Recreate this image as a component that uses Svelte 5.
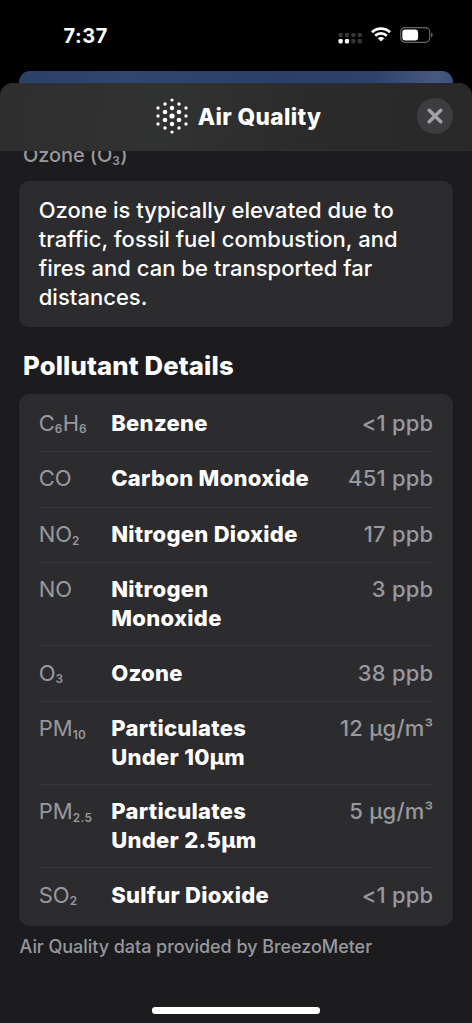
<script lang="ts">
	type Part = { text: string; sub?: boolean };

	const pollutants: { formula: Part[]; name: string[]; value: string; cubic?: boolean }[] = [
		{
			formula: [{ text: 'C' }, { text: '6', sub: true }, { text: 'H' }, { text: '6', sub: true }],
			name: ['Benzene'],
			value: '<1 ppb'
		},
		{ formula: [{ text: 'CO' }], name: ['Carbon Monoxide'], value: '451 ppb' },
		{
			formula: [{ text: 'NO' }, { text: '2', sub: true }],
			name: ['Nitrogen Dioxide'],
			value: '17 ppb'
		},
		{ formula: [{ text: 'NO' }], name: ['Nitrogen', 'Monoxide'], value: '3 ppb' },
		{ formula: [{ text: 'O' }, { text: '3', sub: true }], name: ['Ozone'], value: '38 ppb' },
		{
			formula: [{ text: 'PM' }, { text: '10', sub: true }],
			name: ['Particulates', 'Under 10μm'],
			value: '12 μg/m',
			cubic: true
		},
		{
			formula: [{ text: 'PM' }, { text: '2.5', sub: true }],
			name: ['Particulates', 'Under 2.5μm'],
			value: '5 μg/m',
			cubic: true
		},
		{
			formula: [{ text: 'SO' }, { text: '2', sub: true }],
			name: ['Sulfur Dioxide'],
			value: '<1 ppb'
		}
	];

	const description = [
		'Ozone is typically elevated due to',
		'traffic, fossil fuel combustion, and',
		'fires and can be transported far',
		'distances.'
	];

	// x, y, radius
	const dots = [
		[18, 2, 1.6],
		[18, 10, 2.2],
		[18, 18, 2.6],
		[18, 26, 2.2],
		[18, 34, 1.6],
		[11, 6, 1.7],
		[11, 14, 2.3],
		[11, 22, 2.3],
		[11, 30, 1.7],
		[25, 6, 1.7],
		[25, 14, 2.3],
		[25, 22, 2.3],
		[25, 30, 1.7],
		[4, 10, 1.7],
		[4, 18, 1.7],
		[4, 26, 1.7],
		[32, 10, 1.7],
		[32, 18, 1.7],
		[32, 26, 1.7]
	];
</script>

<div class="screen">
	<div class="status-bar">
		<span class="time">7:37</span>
		<div class="indicators">
			<svg class="signal" viewBox="0 0 24 11" width="24" height="11">
				{#each [0, 1, 2, 3] as i}
					<rect x={0.5 + i * 6.4} y="0" width="4.2" height="4" rx="1.2" fill="#363636" />
					<rect
						x={0.5 + i * 6.4}
						y="6"
						width="4.2"
						height="4.4"
						rx="1.3"
						fill={i < 2 ? '#fff' : '#363636'}
					/>
				{/each}
			</svg>
			<svg class="wifi" viewBox="0 0 20 15" width="20" height="15">
				<g fill="none" stroke="#fff" stroke-width="2.7">
					<path d="M1 5.3C6 .4 14 .4 19 5.3" />
					<path d="M4.2 8.7c3.3-3.1 8.3-3.1 11.6 0" />
				</g>
				<path d="M6.7 11.2c1.9-1.7 4.7-1.7 6.6 0L10 14.6z" fill="#fff" />
			</svg>
			<svg class="battery" viewBox="0 0 34 16" width="34" height="16">
				<rect x=".7" y=".7" width="29" height="14.6" rx="4.4" fill="none" stroke="#666" stroke-width="1.2" />
				<rect x="2.3" y="2.4" width="15.8" height="11.2" rx="3" fill="#fff" />
				<path d="M31.2 5.6c2 .8 2 4 0 4.8z" fill="#666" />
			</svg>
		</div>
	</div>

	<div class="backdrop"></div>

	<div class="sheet">
		<header class="sheet-header">
			<div class="title">
				<svg viewBox="0 0 36 36" width="36" height="36">
					{#each dots as [x, y, r]}
						<circle cx={x} cy={y} {r} fill="#fff" />
					{/each}
				</svg>
				<h1>Air Quality</h1>
			</div>
			<button class="close" aria-label="Close">
				<svg viewBox="0 0 16 16" width="16" height="16">
					<path d="M2.2 2.2l11.6 11.6M13.8 2.2L2.2 13.8" />
				</svg>
			</button>
		</header>

		<main class="content">
			<div class="clip">
				<p class="primary">Ozone (O<span class="sub">3</span>)</p>
			</div>

			<div class="card description">
				{#each description as line}
					<span>{line}</span>
				{/each}
			</div>

			<h2>Pollutant Details</h2>

			<div class="card list">
				{#each pollutants as item}
					<div class="row">
						<span class="formula">
							{#each item.formula as part}<span class:sub={part.sub}>{part.text}</span>{/each}
						</span>
						<span class="name">
							{#each item.name as line}<span>{line}</span>{/each}
						</span>
						<span class="value">{item.value}{#if item.cubic}<span class="cubic">³</span>{/if}</span>
					</div>
				{/each}
			</div>

			<p class="credit">Air Quality data provided by BreezoMeter</p>
		</main>

		<div class="home-indicator"></div>
	</div>
</div>

<style>
	:global(body) {
		background: #000;
	}
	.screen {
		width: 472px;
		height: 1023px;
		display: flex;
		flex-direction: column;
		overflow: hidden;
		background: #000;
		color: #fff;
		font-family: Inter, 'Liberation Sans', sans-serif;
	}
	h1,
	h2,
	p {
		margin: 0;
	}

	.status-bar {
		box-sizing: border-box;
		height: 71px;
		flex: none;
		display: flex;
		justify-content: space-between;
		padding: 23.5px 38px 0 63.5px;
	}
	.time {
		font-size: 20px;
		line-height: 24px;
		font-weight: 700;
		letter-spacing: 0.6px;
	}
	.indicators {
		display: flex;
		align-items: flex-start;
		padding-top: 3.5px;
	}
	.signal {
		margin: 6px 9px 0 0;
	}
	.wifi {
		margin-right: 9px;
	}

	.backdrop {
		height: 12px;
		flex: none;
		margin: 0 19px;
		border-radius: 11px 11px 0 0;
		background: linear-gradient(90deg, #2c4068, #304570 25%, #2b4069 60%, #2e426b 82%, #48597f 96%, #3c5079);
	}

	.sheet {
		flex: 1;
		display: flex;
		flex-direction: column;
		border-radius: 13px 13px 0 0;
		overflow: hidden;
		background: #1c1c1e;
	}
	.sheet-header {
		box-sizing: border-box;
		height: 68px;
		flex: none;
		display: flex;
		align-items: center;
		justify-content: space-between;
		padding: 0 19.5px 1px 153.7px;
		border-bottom: 1px solid #313132;
		background: linear-gradient(100deg, #2e2e2e, #313232 35%, #2b2b2b 65%, #282828);
	}
	.title {
		display: flex;
		align-items: center;
		gap: 8px;
	}
	h1 {
		padding-top: 1px;
		font-size: 22.6px;
		line-height: 28px;
		font-weight: 800;
		letter-spacing: 0.38px;
	}
	.close {
		width: 36px;
		height: 36px;
		padding: 0;
		border: 0;
		border-radius: 50%;
		display: flex;
		align-items: center;
		justify-content: center;
		background: #3d3d40;
	}
	.close path {
		fill: none;
		stroke: #a1a1a8;
		stroke-width: 3.4;
		stroke-linecap: round;
	}

	.content {
		flex: 1;
		padding: 0 19px;
	}
	/* label scrolled partly under the header */
	.clip {
		height: 29.6px;
		display: flex;
		align-items: flex-end;
		overflow: hidden;
	}
	.primary {
		padding: 0 0 13.4px 4px;
		font-size: 20px;
		line-height: 24px;
		font-weight: 500;
		letter-spacing: -0.1px;
		color: #98989f;
		white-space: nowrap;
	}
	.card {
		border-radius: 10px;
		background: #2c2c2e;
	}
	.description {
		box-sizing: border-box;
		height: 146px;
		padding: 15.8px 19.7px;
		display: flex;
		flex-direction: column;
		font-size: 22px;
		line-height: 28.75px;
		font-weight: 500;
		letter-spacing: 0.03px;
		white-space: nowrap;
	}
	h2 {
		padding: 23px 4px 11.7px;
		font-size: 25.7px;
		line-height: 32.3px;
		font-weight: 800;
		letter-spacing: 0.14px;
	}
	.list {
		padding: 1.8px 19.7px 2.7px;
	}
	.row {
		box-sizing: border-box;
		min-height: 55.6px;
		display: grid;
		grid-template-columns: 72.5px 1fr auto;
		padding: 13.2px 0 12.5px;
		font-size: 22px;
		line-height: 28.7px;
		white-space: nowrap;
	}
	.row + .row {
		border-top: 1px solid #38383a;
		padding-top: 12.3px;
	}
	.formula {
		color: #98989f;
	}
	.name {
		display: flex;
		flex-direction: column;
		font-weight: 800;
		letter-spacing: 0.3px;
	}
	.value {
		font-weight: 500;
		letter-spacing: 0.2px;
		color: #98989f;
	}
	.cubic {
		position: relative;
		top: -1px;
		font-size: 19px;
		line-height: 0;
	}
	.sub {
		position: relative;
		top: 2.8px;
		font-size: 11.8px;
		line-height: 0;
		font-weight: 600;
		letter-spacing: 0.4px;
	}
	.credit {
		padding: 9.3px 0.6px 0;
		font-size: 18px;
		line-height: 24px;
		font-weight: 500;
		letter-spacing: -0.05px;
		color: #98989f;
		white-space: nowrap;
	}

	.home-indicator {
		width: 168px;
		height: 6.6px;
		flex: none;
		margin: 0 auto 9.4px;
		border-radius: 3.3px;
		background: #fff;
	}
</style>
